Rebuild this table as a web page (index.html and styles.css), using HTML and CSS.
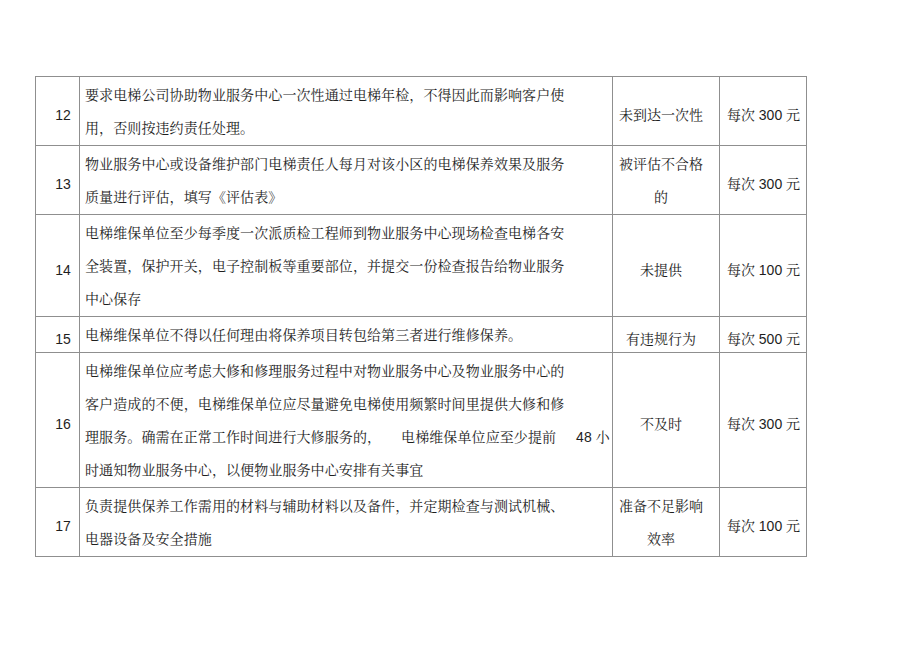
FILE: index.html
```html
<!DOCTYPE html>
<html lang="zh">
<head>
<meta charset="utf-8">
<link rel="stylesheet" href="styles.css">
</head>
<body>
<table class="sheet">
  <colgroup>
    <col class="c-no"><col class="c-desc"><col class="c-res"><col class="c-fine">
  </colgroup>
  <tr>
    <td class="no">12</td>
    <td class="desc">要求电梯公司协助物业服务中心一次性通过电梯年检，不得因此而影响客户使<br>用，否则按违约责任处理。</td>
    <td class="res mid">未到达一次性</td>
    <td class="fine">每次 300 元</td>
  </tr>
  <tr>
    <td class="no">13</td>
    <td class="desc">物业服务中心或设备维护部门电梯责任人每月对该小区的电梯保养效果及服务<br>质量进行评估，填写《评估表》</td>
    <td class="res multi">被评估不合格<br>的</td>
    <td class="fine">每次 300 元</td>
  </tr>
  <tr>
    <td class="no">14</td>
    <td class="desc">电梯维保单位至少每季度一次派质检工程师到物业服务中心现场检查电梯各安<br>全装置，保护开关，电子控制板等重要部位，并提交一份检查报告给物业服务<br>中心保存</td>
    <td class="res mid">未提供</td>
    <td class="fine">每次 100 元</td>
  </tr>
  <tr>
    <td class="no">15</td>
    <td class="desc">电梯维保单位不得以任何理由将保养项目转包给第三者进行维修保养。</td>
    <td class="res mid">有违规行为</td>
    <td class="fine">每次 500 元</td>
  </tr>
  <tr>
    <td class="no">16</td>
    <td class="desc">电梯维保单位应考虑大修和修理服务过程中对物业服务中心及物业服务中心的<br>客户造成的不便，电梯维保单位应尽量避免电梯使用频繁时间里提供大修和修<br>理服务。确需在正常工作时间进行大修服务的，&nbsp;&nbsp;&nbsp;&nbsp;&nbsp;电梯维保单位应至少提前&nbsp;&nbsp;&nbsp;&nbsp;&nbsp;48 小<br>时通知物业服务中心，以便物业服务中心安排有关事宜</td>
    <td class="res mid">不及时</td>
    <td class="fine">每次 300 元</td>
  </tr>
  <tr>
    <td class="no">17</td>
    <td class="desc">负责提供保养工作需用的材料与辅助材料以及备件，并定期检查与测试机械、<br>电器设备及安全措施</td>
    <td class="res multi">准备不足影响<br>效率</td>
    <td class="fine">每次 100 元</td>
  </tr>
</table>
</body>
</html>
```

FILE: styles.css
```css
html, body {
  margin: 0;
  padding: 0;
  background: #ffffff;
}

body {
  font-family: "Liberation Sans", "Noto Serif CJK SC", "Noto Sans CJK SC", sans-serif;
  font-size: 14px;
  color: #1e1e1e;
}

.sheet {
  border-collapse: collapse;
  margin: 76px 0 0 35px;
  table-layout: fixed;
  width: 772px;
}

.c-no { width: 44px; }
.c-desc { width: 533px; }
.c-res { width: 107px; }
.c-fine { width: 87px; }

.sheet td {
  border: 1px solid #8f8f8f;
  padding: 0;
  line-height: 33px;
}

.desc {
  vertical-align: top;
  padding: 2px 0 0 5px !important;
  white-space: nowrap;
  letter-spacing: 0.1px;
}

.no {
  vertical-align: middle;
  text-align: center;
  padding: 8px 0 0 11px !important;
  line-height: 20px !important;
}

.fine {
  vertical-align: middle;
  text-align: center;
  padding: 8px 0 0 1px !important;
  line-height: 20px !important;
  white-space: nowrap;
}

.res {
  text-align: center;
  padding-right: 10px !important;
  white-space: nowrap;
}

.res.mid {
  vertical-align: middle;
  padding-top: 8px !important;
  line-height: 20px;
}

.res.multi {
  vertical-align: top;
  padding-top: 2px !important;
}
```
